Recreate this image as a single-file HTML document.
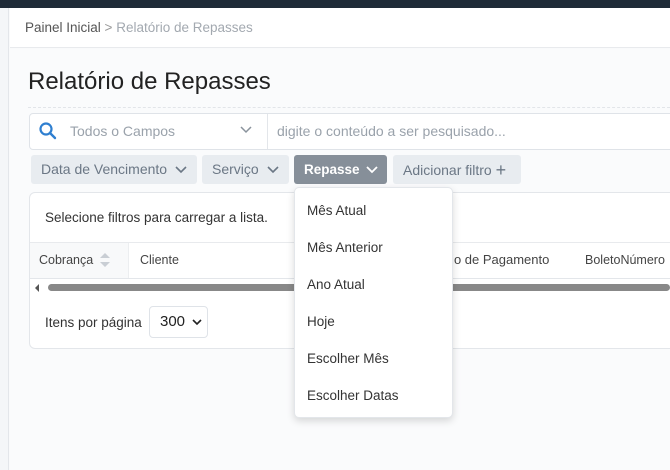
<!DOCTYPE html>
<html><head><style>
*{box-sizing:border-box;margin:0;padding:0}
body{width:670px;height:470px;overflow:hidden;background:#f9fafb;font-family:"Liberation Sans",sans-serif;position:relative;color:#333}
.abs{position:absolute}
.top{left:0;top:0;width:670px;height:8px;background:#1f2b38}
.side{left:0;top:8px;width:9px;height:462px;background:#f4f6f8;border-right:1px solid #e3e6ea}
.head{left:10px;top:8px;width:660px;height:40px;background:#fff;border-bottom:1px solid #e8eaed}
.chip{position:absolute;top:155px;height:29px;background:#e8ecf0;border-radius:3px;color:#6b7785;font-size:14px;line-height:29px;padding-left:10px}
.dd div{height:37px;line-height:37px;padding-left:12px;font-size:13.5px;color:#333}
</style></head><body>
<div class="abs top"></div>
<div class="abs side"></div>
<div class="abs head"></div>
<div class="abs" style="left:25px;top:20px;font-size:13.5px;color:#555">Painel Inicial <span style="color:#999">&gt;</span> <span style="color:#a3a9b0">Relatório de Repasses</span></div>
<div class="abs" style="left:10px;top:49px;width:660px;height:421px;background:#fafbfc"></div>
<div class="abs" style="left:28px;top:68px;font-size:24px;color:#222">Relatório de Repasses</div>
<div class="abs" style="left:28px;top:107px;width:642px;border-top:1px dashed #e2e5e9"></div>
<div class="abs" style="left:29px;top:113px;width:650px;height:37px;background:#fff;border:1px solid #dfe3e8;border-radius:4px"></div>
<svg class="abs" style="left:38px;top:121px" width="20" height="20" viewBox="0 0 20 20"><circle cx="8" cy="8" r="5.5" fill="none" stroke="#2f7fd0" stroke-width="2.2"/><line x1="12" y1="12" x2="17" y2="17" stroke="#2f7fd0" stroke-width="2.4" stroke-linecap="round"/></svg>
<div class="abs" style="left:70px;top:123px;font-size:14px;color:#9aa2ab">Todos o Campos</div>
<svg class="abs" style="left:240px;top:126px" width="12" height="8"><path d="M1 1l5 5 5-5" fill="none" stroke="#8a939c" stroke-width="1.5"/></svg>
<div class="abs" style="left:267px;top:114px;width:1px;height:35px;background:#e3e6ea"></div>
<div class="abs" style="left:277px;top:123px;font-size:14px;color:#9aa2ab">digite o conteúdo a ser pesquisado...</div>
<div class="chip" style="left:31px;width:166px">Data de Vencimento <svg width="12" height="8" style="margin-left:4px"><path d="M1 1l5 5 5-5" fill="none" stroke="#6b7785" stroke-width="1.6"/></svg></div>
<div class="chip" style="left:202px;width:87px">Serviço <svg width="12" height="8" style="margin-left:4px"><path d="M1 1l5 5 5-5" fill="none" stroke="#6b7785" stroke-width="1.6"/></svg></div>
<div class="chip" style="left:294px;width:93px;background:#868f99;color:#fff;font-weight:bold;font-size:13.5px">Repasse <svg width="12" height="8" style="margin-left:3px"><path d="M1 1l5 5 5-5" fill="none" stroke="#fff" stroke-width="1.8"/></svg></div>
<div class="chip" style="left:393px;width:128px">Adicionar filtro <span style="font-size:18px;position:relative;top:1px">+</span></div>
<div class="abs" style="left:29px;top:192px;width:650px;height:157px;background:#fff;border:1px solid #e3e6ea;border-radius:6px"></div>
<div class="abs" style="left:45px;top:210px;font-size:13.5px;color:#333">Selecione filtros para carregar a lista.</div>
<div class="abs" style="left:30px;top:242px;width:640px;height:37px;border-top:1px solid #e8eaed;border-bottom:1px solid #e3e6ea"></div>
<div class="abs" style="left:30px;top:243px;width:99px;height:35px;background:#f8f9fa;border-right:1px solid #eceef0"></div>
<div class="abs" style="left:39px;top:253px;font-size:12.5px;color:#444">Cobrança</div>
<svg class="abs" style="left:99px;top:251px" width="12" height="18"><path d="M1 7l5-5 5 5z M1 11l5 5 5-5z" fill="#c9ced4"/></svg>
<div class="abs" style="left:140px;top:253px;font-size:12.5px;color:#444">Cliente</div>
<div class="abs" style="left:433px;top:252px;font-size:13px;color:#444">Meio de Pagamento</div>
<div class="abs" style="left:585px;top:253px;font-size:12.5px;color:#444">BoletoNúmero</div>
<div class="abs" style="left:48px;top:284px;width:622px;height:7px;background:#888;border-radius:4px"></div>
<svg class="abs" style="left:35px;top:284px" width="5" height="8"><path d="M4 0v8L0 4z" fill="#555"/></svg>
<div class="abs" style="left:45px;top:315px;font-size:13.5px;color:#333">Itens por página</div>
<div class="abs" style="left:149px;top:306px;width:59px;height:32px;border:1px solid #dfe3e8;border-radius:4px;background:#fff;font-size:15px;line-height:30px;padding-left:10px;color:#222">300 <svg width="10" height="7" style="margin-left:3px"><path d="M1 1l4 4 4-4" fill="none" stroke="#222" stroke-width="1.6"/></svg></div>
<div class="abs dd" style="left:294px;top:187px;width:159px;height:231px;background:#fff;border:1px solid #e3e6ea;border-radius:5px;box-shadow:0 3px 8px rgba(0,0,0,.15);padding-top:4px">
<div>Mês Atual</div><div>Mês Anterior</div><div>Ano Atual</div><div>Hoje</div><div>Escolher Mês</div><div>Escolher Datas</div>
</div>
</body></html>
